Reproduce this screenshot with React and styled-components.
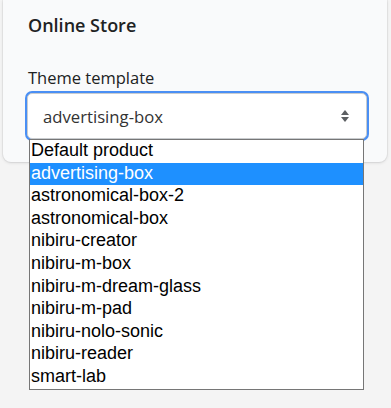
import React from 'react';
import styled, { createGlobalStyle } from 'styled-components';

const GlobalStyle = createGlobalStyle`
  html, body { margin:0; padding:0; background:#f4f4f4; }
  body { font-family:"Open Sans", "Noto Sans", sans-serif; }
`

const Page = styled.div`
  padding:0 4px 0 3px;
  height:408px;
  overflow:hidden;
`

const Card = styled.section`
  background:#f9fafb;
  border-radius:0 0 8px 8px;
  box-shadow:0 0 0 1px rgba(63,63,68,0.06), 0 1px 3px 0 rgba(63,63,68,0.15);
  padding:13px 21px 23px 25px;
`

const Heading = styled.h2`
  margin:0 0 29px;
  font-size:18px;
  font-weight:600;
  line-height:24px;
  color:#202223;
`

const Label = styled.label`
  display:block;
  font-size:16.5px;
  line-height:24px;
  color:#202223;
  margin-bottom:3px;
`

const SelectWrap = styled.div`
  position:relative;
`

const SelectBox = styled.div`
  height:44px;
  margin:0 -1px 0 -1px;
  display:flex;
  align-items:center;
  justify-content:space-between;
  padding:0 16px 0 15px;
  background:#fff;
  border:1px solid #c9cccf;
  border-radius:5px;
  box-shadow:0 0 0 2px #4a8ff4;
  font-size:16.7px;
  color:#333;
`

const Arrows = styled.svg`
  width:10px;
  height:14px;
  display:block;
`

const Dropdown = styled.ul`
  position:absolute;
  top:46px;
  left:1px;
  width:333px;
  margin:0;
  padding:0;
  list-style:none;
  background:#fff;
  border:1px solid #767676;
  font-family:"Liberation Sans", Arial, sans-serif;
  font-size:18px;
`

const Option = styled.li`
  height:22.6px;
  line-height:21px;
  padding-left:1px;
  white-space:nowrap;
  color:${({ selected }) => selected ? '#fff' : '#000'};
  background:${({ selected }) => selected ? '#1e90ff' : 'transparent'};
`

const templates = [
  'Default product',
  'advertising-box',
  'astronomical-box-2',
  'astronomical-box',
  'nibiru-creator',
  'nibiru-m-box',
  'nibiru-m-dream-glass',
  'nibiru-m-pad',
  'nibiru-nolo-sonic',
  'nibiru-reader',
  'smart-lab'
]

const App = () => {
  const current = 'advertising-box'
  return (
    <>
      <GlobalStyle />
      <Page>
        <Card>
          <Heading>Online Store</Heading>
          <Label>Theme template</Label>
          <SelectWrap>
            <SelectBox>
              <span>{current}</span>
              <Arrows viewBox="0 0 10 14">
                <path d="M5 1 L9 6 H1 Z" fill="#5c5f62" />
                <path d="M5 13 L9 8 H1 Z" fill="#5c5f62" />
              </Arrows>
            </SelectBox>
            <Dropdown>
              {templates.map((name) => (
                <Option key={name} selected={name === current}>{name}</Option>
              ))}
            </Dropdown>
          </SelectWrap>
        </Card>
      </Page>
    </>
  );
};

export default App;
